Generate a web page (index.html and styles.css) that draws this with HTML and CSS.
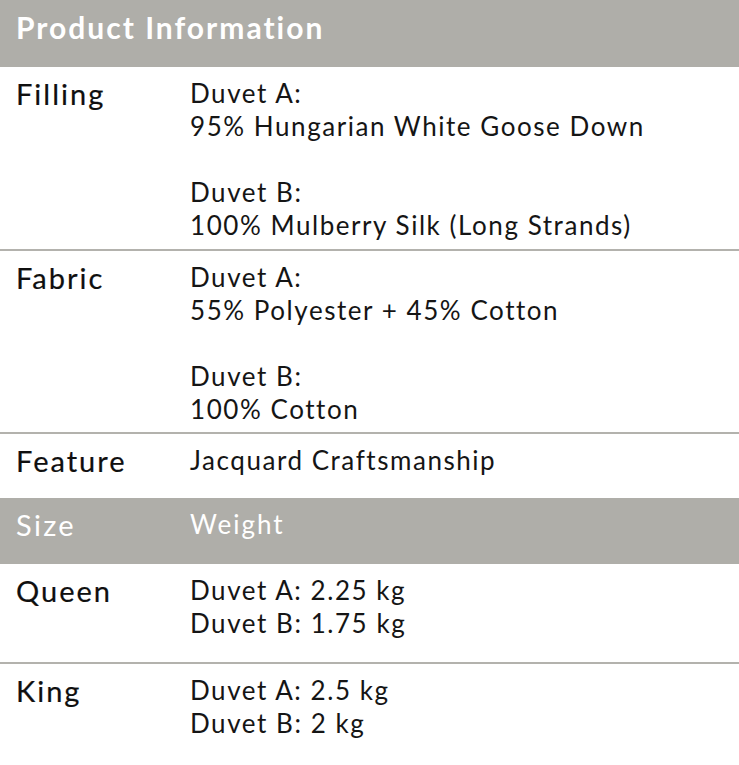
FILE: index.html
```html
<!DOCTYPE html>
<html>
<head>
<meta charset="utf-8">
<link rel="stylesheet" href="styles.css">
</head>
<body>
<div class="sheet">
  <div class="head head-main">Product Information</div>
  <div class="row row-filling">
    <div class="label">Filling</div>
    <div class="value">
      <p>Duvet A:<br>95% Hungarian White Goose Down</p>
      <p>Duvet B:<br>100% Mulberry Silk (Long Strands)</p>
    </div>
  </div>
  <div class="row row-fabric">
    <div class="label">Fabric</div>
    <div class="value">
      <p>Duvet A:<br>55% Polyester + 45% Cotton</p>
      <p>Duvet B:<br>100% Cotton</p>
    </div>
  </div>
  <div class="row row-feature">
    <div class="label">Feature</div>
    <div class="value"><p>Jacquard Craftsmanship</p></div>
  </div>
  <div class="head head-size">
    <div class="hlabel">Size</div>
    <div class="hvalue">Weight</div>
  </div>
  <div class="row row-queen">
    <div class="label">Queen</div>
    <div class="value"><p>Duvet A: 2.25 kg<br>Duvet B: 1.75 kg</p></div>
  </div>
  <div class="row row-king">
    <div class="label">King</div>
    <div class="value"><p>Duvet A: 2.5 kg<br>Duvet B: 2 kg</p></div>
  </div>
</div>
</body>
</html>
```
FILE: styles.css
```css
html, body {
  margin: 0;
  padding: 0;
  background: #ffffff;
}
body {
  font-family: "Lato", "Liberation Sans", sans-serif;
  color: #151515;
}
.sheet {
  width: 739px;
}
.head {
  background: #afaea9;
  color: #ffffff;
}
.head-main {
  height: 67px;
  box-sizing: border-box;
  padding: 10px 16px 0;
  font-size: 30px;
  font-weight: 700;
  letter-spacing: 2px;
  line-height: 35px;
}
.head-size {
  height: 66px;
  box-sizing: border-box;
  display: grid;
  grid-template-columns: 174px 1fr;
  padding: 10px 0 0 16px;
  align-items: start;
}
.hlabel {
  font-size: 29px;
  letter-spacing: 2.3px;
  line-height: 34px;
}
.hvalue {
  font-size: 26px;
  letter-spacing: 2px;
  line-height: 32px;
}
.row {
  display: grid;
  grid-template-columns: 174px 1fr;
  padding: 10px 0 0 16px;
  box-sizing: border-box;
  border-bottom: 2px solid #b3b2ad;
}
.label {
  font-size: 29px;
  line-height: 34px;
  letter-spacing: 2px;
  font-weight: 400;
  color: #0f0f0f;
  -webkit-text-stroke: 0.2px #0f0f0f;
}
.value {
  font-size: 26px;
  line-height: 33px;
  letter-spacing: 1.55px;
}
.value p {
  margin: 0;
}
.value p + p {
  margin-top: 33px;
}
.row-filling { height: 184px; }
.row-fabric { height: 183px; }
.row-feature { height: 64px; border-bottom: none; }
.row-queen { height: 100px; }
.row-king { border-bottom: none; }
```
